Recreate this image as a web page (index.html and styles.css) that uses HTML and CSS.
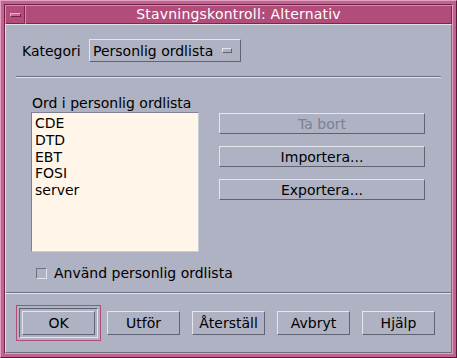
FILE: index.html
```html
<!DOCTYPE html>
<html lang="sv">
<head>
    <meta charset="UTF-8">
    <title>Stavningskontroll: Alternativ</title>
    <link rel="stylesheet" href="styles.css">
</head>
<body>
    <div class="window">
        <div class="frame">
            <div class="titlebar">
                <div class="menu-btn"><span class="menu-bar"></span></div>
                <div class="title">Stavningskontroll: Alternativ</div>
            </div>

            <div class="content">
                <div class="main">
                    <div class="category-row">
                        <span class="cat-label">Kategori</span>
                        <div class="option-menu">
                            <span>Personlig ordlista</span>
                            <span class="option-ind"></span>
                        </div>
                    </div>

                    <div class="separator"></div>

                    <div class="list-area">
                        <div class="list-col">
                            <div class="list-label">Ord i personlig ordlista</div>
                            <div class="listbox">
                                <div class="item">CDE</div>
                                <div class="item">DTD</div>
                                <div class="item">EBT</div>
                                <div class="item">FOSI</div>
                                <div class="item">server</div>
                            </div>
                        </div>
                        <div class="side-buttons">
                            <button class="btn wide disabled">Ta bort</button>
                            <button class="btn wide">Importera...</button>
                            <button class="btn wide">Exportera...</button>
                        </div>
                    </div>

                    <label class="check-row">
                        <span class="checkbox"></span>
                        Använd personlig ordlista
                    </label>
                </div>

                <div class="actions">
                    <div class="default-ring">
                        <div class="default-frame">
                            <button class="btn">OK</button>
                        </div>
                    </div>
                    <button class="btn">Utför</button>
                    <button class="btn">Återställ</button>
                    <button class="btn">Avbryt</button>
                    <button class="btn">Hjälp</button>
                </div>
            </div>
        </div>
    </div>
</body>
</html>
```

FILE: styles.css
```css
body {
    margin: 0;
    background: #aeb2c3;
    font-family: "DejaVu Sans", sans-serif;
    font-size: 14px;
    color: #000;
}

/* window frame */
.window {
    width: 457px;
    height: 358px;
    box-sizing: border-box;
    display: flex;
    padding: 3px;
    background: #c4628f;
    border: 1px solid;
    border-color: #e3a1c0 #5a1737 #5a1737 #e3a1c0;
}

.frame {
    flex: 1;
    display: flex;
    flex-direction: column;
    border: 1px solid;
    border-color: #6e2149 #e3a1c0 #e3a1c0 #6e2149;
}

.titlebar {
    height: 19px;
    display: flex;
    background: #b24d7a;
    color: #fff;
}

.menu-btn {
    width: 20px;
    display: flex;
    align-items: center;
    justify-content: center;
    box-shadow: inset 1px 1px #d98ab0, inset -1px -1px #7a2850;
}

.menu-bar {
    width: 11px;
    height: 4px;
    box-sizing: border-box;
    background: #c46a94;
    border: 1px solid;
    border-color: #eab3cc #6e2149 #6e2149 #eab3cc;
}

.title {
    flex: 1;
    text-align: center;
    line-height: 19px;
    letter-spacing: 0.2px;
    box-shadow: inset 1px 1px #d98ab0, inset -1px -1px #7a2850;
}

/* dialog body */
.content {
    flex: 1;
    display: flex;
    flex-direction: column;
    background: #aeb2c3;
    border: 1px solid;
    border-color: #dfe1e9 #6b6f82 #6b6f82 #dfe1e9;
}

.main {
    flex: 1;
    padding: 14px 10px 0;
    border-bottom: 1px solid #6b6f82;
}

.category-row {
    display: flex;
    align-items: center;
    height: 23px;
}

.cat-label {
    width: 67px;
    margin-left: 6px;
}

.option-menu {
    width: 152px;
    height: 23px;
    box-sizing: border-box;
    display: flex;
    align-items: center;
    justify-content: space-between;
    padding: 0 8px 0 3px;
    border: 1px solid;
    border-color: #e4e6ee #5e6272 #5e6272 #e4e6ee;
}

.option-ind {
    width: 10px;
    height: 5px;
    box-sizing: border-box;
    border: 1px solid;
    border-color: #e4e6ee #5e6272 #5e6272 #e4e6ee;
}

.separator {
    margin-top: 14px;
    border-top: 1px solid #6b6f82;
    border-bottom: 1px solid #e4e6ee;
}

.list-area {
    display: flex;
    margin-top: 17px;
}

.list-col {
    width: 168px;
    margin-left: 15px;
}

.list-label {
    line-height: 17px;
    padding-left: 1px;
}

.listbox {
    height: 140px;
    box-sizing: border-box;
    padding: 2px 3px;
    background: #fff6e9;
    border: 1px solid;
    border-color: #7d8192 #c9ccd6 #c9ccd6 #7d8192;
}

.item {
    line-height: 16.75px;
}

.side-buttons {
    width: 206px;
    margin-left: 20px;
    padding-top: 18px;
    display: flex;
    flex-direction: column;
    gap: 12px;
}

.check-row {
    display: flex;
    align-items: center;
    line-height: 17px;
    margin: 13px 0 0 20px;
}

.checkbox {
    width: 11px;
    height: 11px;
    box-sizing: border-box;
    margin-right: 7px;
    border: 1px solid;
    border-color: #6b6f82 #e4e6ee #e4e6ee #6b6f82;
}

/* buttons */
.btn {
    width: 73px;
    height: 24px;
    box-sizing: border-box;
    padding: 0;
    margin: 0;
    font: inherit;
    color: #000;
    background: #aeb2c3;
    border: 1px solid;
    border-color: #e4e6ee #5e6272 #5e6272 #e4e6ee;
}

.btn.wide {
    width: 206px;
    height: 21px;
}

.btn.disabled {
    color: #7c8090;
}

.actions {
    height: 59px;
    box-sizing: border-box;
    display: flex;
    align-items: flex-start;
    padding: 11px 10px 0;
    border-top: 1px solid #e4e6ee;
}

.actions > .btn {
    margin: 6px 0 0 12px;
}

.default-ring {
    padding: 2px;
    border: 1px solid #b24d7a;
    margin-right: -6px;
}

.default-frame {
    display: flex;
    padding: 2px;
    border: 1px solid;
    border-color: #5e6272 #e4e6ee #e4e6ee #5e6272;
}
```
